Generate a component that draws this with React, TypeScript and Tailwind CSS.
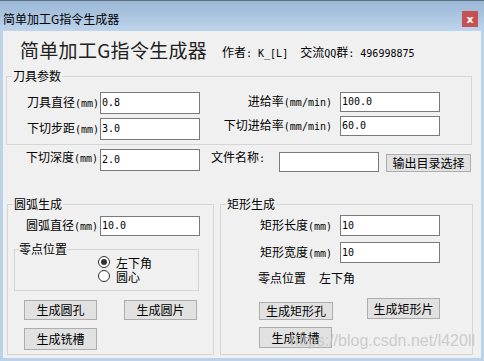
import React from "react";

function Mix({ s }: { s: string }) {
  const parts = s.split(/([\x00-\x7f]+)/).filter(Boolean);
  return (
    <>
      {parts.map((p, i) =>
        /^[\x00-\x7f]+$/.test(p) ? (
          <span key={i} className="font-['DejaVu_Sans_Mono',monospace] text-[10px] whitespace-pre">
            {p}
          </span>
        ) : (
          <span key={i}>{p}</span>
        )
      )}
    </>
  );
}

function Box({ v, className }: { v: string; className: string }) {
  return (
    <div
      className={`w-[100px] shrink-0 border border-[#7a7a7a] bg-white flex items-center pl-[1px] font-['DejaVu_Sans_Mono',monospace] text-[10px] leading-none text-black ${className}`}
    >
      {v}
    </div>
  );
}

function Btn({ t, className }: { t: string; className: string }) {
  return (
    <div
      className={`shrink-0 bg-[#e1e1e1] border border-[#adadad] flex items-center justify-center text-[12px] leading-none text-black ${className}`}
    >
      {t}
    </div>
  );
}

function Group({
  label,
  className,
  labelClass,
  children,
}: {
  label: string;
  className: string;
  labelClass?: string;
  children?: React.ReactNode;
}) {
  return (
    <div className={`relative shrink-0 border border-[#d5d5d5] ${className}`}>
      <span
        className={`absolute -top-[8px] bg-[#f0f0f0] text-[12px] leading-[14px] whitespace-nowrap ${
          labelClass ?? "left-[5px] px-[1px]"
        }`}
      >
        {label}
      </span>
      {children}
    </div>
  );
}

function Radio({ on, t }: { on: boolean; t: string }) {
  return (
    <div className="h-[14px] flex items-center gap-[6px]">
      <div className="w-[12px] h-[12px] rounded-full border border-[#333333] bg-white flex items-center justify-center">
        {on && <div className="w-[6px] h-[6px] rounded-full bg-[#333333]" />}
      </div>
      <span className="text-[12px] leading-[13px]">{t}</span>
    </div>
  );
}

export default function App() {
  return (
    <div className="w-[484px] h-[361px] bg-[#bcd2ea] flex flex-col font-['Noto_Sans_CJK_SC',sans-serif] text-black relative overflow-hidden">
      {/* title bar */}
      <div className="h-[31px] shrink-0 border-t border-[#5c6e82] bg-gradient-to-b from-[#9ab7d6] to-[#bdd4ec] flex items-start">
        <span className="ml-[3px] mt-[10px] text-[12px] leading-[16px]">简单加工G指令生成器</span>
        <div className="ml-auto mr-[6px] mt-[10px] w-[16px] h-[16px] bg-[#c75050] flex items-center justify-center text-white text-[11px] font-bold leading-none font-['DejaVu_Sans',sans-serif]">
          x
        </div>
      </div>

      {/* client area */}
      <div className="mx-[3px] h-[327px] shrink-0 bg-[#f0f0f0] flex flex-col">
        {/* heading row */}
        <div className="flex items-start">
          <span className="ml-[17px] mt-[7px] w-[202px] shrink-0 text-[19px] leading-[24px] text-[#222] tracking-[0.3px]">
            简单加工G指令生成器
          </span>
          <span className="mt-[13px] text-[12px] leading-[16px] whitespace-pre">
            <Mix s="作者: K_[L]  交流QQ群: 496998875" />
          </span>
        </div>

        {/* 刀具参数 */}
        <Group label="刀具参数" className="ml-[3px] mt-[14px] w-[466px] h-[69px]">
          <div className="flex items-start">
            <div className="flex flex-col pt-[15px] gap-[4px]">
              <div className="flex items-center">
                <span className="w-[93px] pr-[1px] text-right text-[12px] leading-[16px]">
                  <Mix s="刀具直径(mm)" />
                </span>
                <Box v="0.8" className="h-[22px]" />
              </div>
              <div className="flex items-center">
                <span className="w-[93px] pr-[1px] text-right text-[12px] leading-[16px]">
                  <Mix s="下切步距(mm)" />
                </span>
                <Box v="3.0" className="h-[22px]" />
              </div>
            </div>
            <div className="flex flex-col pt-[15px] gap-[4px]">
              <div className="flex items-center">
                <span className="w-[140px] pr-[8px] text-right text-[12px] leading-[16px]">
                  <Mix s="进给率(mm/min)" />
                </span>
                <Box v="100.0" className="h-[20px]" />
              </div>
              <div className="flex items-center">
                <span className="w-[140px] pr-[8px] text-right text-[12px] leading-[16px]">
                  <Mix s="下切进给率(mm/min)" />
                </span>
                <Box v="60.0" className="h-[20px]" />
              </div>
            </div>
          </div>
        </Group>

        {/* row 3 */}
        <div className="flex items-start mt-[4px]">
          <span className="w-[97px] pr-[2px] text-right text-[12px] leading-[16px]">
            <Mix s="下切深度(mm)" />
          </span>
          <Box v="2.0" className="h-[22px]" />
          <span className="ml-[11px] w-[68px] text-[12px] leading-[16px]">
            <Mix s="文件名称:" />
          </span>
          <Box v="" className="h-[20px] mt-[3px]" />
          <Btn t="输出目录选择" className="ml-[7px] mt-[5px] w-[85px] h-[18px]" />
        </div>

        {/* bottom groups */}
        <div className="flex items-start ml-[4px] mt-[32px] gap-[6px]">
          <Group label="圆弧生成" className="w-[207px] h-[151px]">
            <div className="flex flex-col">
              <div className="flex items-center pt-[11px]">
                <span className="w-[92px] pr-[2px] text-right text-[12px] leading-[16px]">
                  <Mix s="圆弧直径(mm)" />
                </span>
                <Box v="10.0" className="h-[20px]" />
              </div>
              <Group
                label="零点位置"
                labelClass="left-[4px]"
                className="ml-[6px] mt-[13px] w-[185px] h-[42px]"
              >
                <div className="pl-[83px] pt-[5px] flex flex-col">
                  <Radio on t="左下角" />
                  <Radio on={false} t="圆心" />
                </div>
              </Group>
              <div className="flex items-start mt-[9px]">
                <Btn t="生成圆孔" className="ml-[16px] w-[73px] h-[20px]" />
                <Btn t="生成圆片" className="ml-[27px] w-[73px] h-[20px]" />
              </div>
              <Btn t="生成铣槽" className="ml-[16px] mt-[8px] w-[73px] h-[22px]" />
            </div>
          </Group>

          <Group label="矩形生成" className="w-[253px] h-[151px]">
            <div className="flex flex-col">
              <div className="flex items-center pt-[10px]">
                <span className="w-[119px] pr-[8px] text-right text-[12px] leading-[16px]">
                  <Mix s="矩形长度(mm)" />
                </span>
                <Box v="10" className="h-[21px]" />
              </div>
              <div className="flex items-center mt-[6px]">
                <span className="w-[119px] pr-[8px] text-right text-[12px] leading-[16px]">
                  <Mix s="矩形宽度(mm)" />
                </span>
                <Box v="10" className="h-[21px]" />
              </div>
              <div className="pl-[37px] mt-[7px] text-[12px] leading-[16px]">
                零点位置<span className="ml-[13px]">左下角</span>
              </div>
              <div className="flex items-start mt-[12px]">
                <Btn t="生成矩形孔" className="ml-[38px] mt-[4px] w-[74px] h-[18px]" />
                <Btn t="生成矩形片" className="ml-[34px] w-[73px] h-[21px]" />
              </div>
              <Btn t="生成铣槽" className="ml-[38px] mt-[7px] w-[73px] h-[21px]" />
            </div>
          </Group>
        </div>
      </div>

      {/* watermark */}
      <span className="absolute left-[290px] top-[332px] text-[16px] leading-[18px] font-['Liberation_Sans',sans-serif] text-[#c4c4c4] opacity-80 pointer-events-none whitespace-nowrap">
        https://blog.csdn.net/l420ll
      </span>
    </div>
  );
}
